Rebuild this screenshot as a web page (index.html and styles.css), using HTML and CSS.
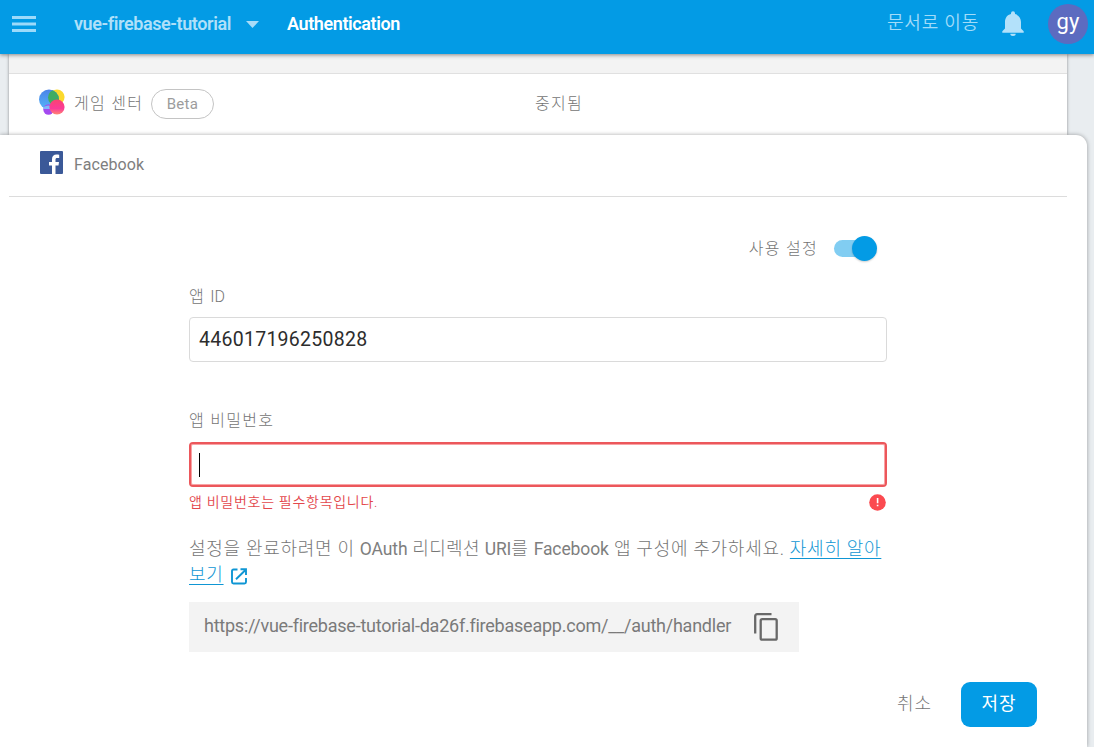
FILE: index.html
```html
<!DOCTYPE html>
<html lang="ko">
<head>
<meta charset="utf-8">
<title>Authentication</title>
<link rel="stylesheet" href="styles.css">
</head>
<body>
<header class="topbar">
  <svg class="menu" width="24" height="16" viewBox="0 0 24 16"><path d="M0 0h24v3H0zM0 6.500h24v3H0zM0 13h24v3H0z" fill="#9cdafa"/></svg>
  <span class="project">vue-firebase-tutorial</span>
  <svg class="caret" width="13" height="7" viewBox="0 0 13 7"><path d="M0 0h13L6.500 7z" fill="#a8dcf8"/></svg>
  <span class="title">Authentication</span>
  <span class="docs">문서로 이동</span>
  <svg class="bell" width="22" height="26" viewBox="0 0 22 26"><path d="M9 2.200a2 2 0 0 1 4 0v.9c3.800.9 6 4 6 8v6.500l2.700 2.700v1.400H.3v-1.400L3 17.600v-6.500c0-4 2.200-7.100 6-8zM8.300 22.700h5.400a2.700 2.200 0 0 1-5.400 0z" fill="#b3e1fa"/></svg>
  <span class="avatar">gy</span>
</header>
<main class="page">
  <section class="providers">
    <div class="spacer"></div>
    <div class="row">
      <svg class="game" width="26" height="26" viewBox="0 0 26 26">
        <defs>
          <linearGradient id="blue" x2="0" y2="1"><stop stop-color="#4b83e8"/><stop offset="1" stop-color="#55b5f8"/></linearGradient>
          <linearGradient id="pink" x2="0" y2="1"><stop stop-color="#fb4370"/><stop offset=".6" stop-color="#fa3b98"/><stop offset="1" stop-color="#ff8a70"/></linearGradient>
          <clipPath id="overlap"><circle cx="10" cy="10.500" r="10"/></clipPath>
        </defs>
        <circle cx="18" cy="8" r="7.600" fill="#fbd92c"/>
        <circle cx="10" cy="10.500" r="10" fill="url(#blue)"/>
        <circle cx="17" cy="8.500" r="8" fill="#3eac62" clip-path="url(#overlap)"/>
        <circle cx="9.500" cy="20.500" r="5.200" fill="#a44af0"/>
        <path d="M4.700 18a8 8 0 0 1 9 0v2H4.500z" fill="#7db9fb"/>
        <circle cx="18" cy="18" r="7.600" fill="url(#pink)"/>
      </svg>
      <span class="name korean">게임 센터</span>
      <span class="badge">Beta</span>
      <span class="status korean">중지됨</span>
    </div>
  </section>
  <section class="card">
    <div class="card-head">
      <svg class="fb" width="23" height="23" viewBox="0 0 23 23"><rect width="23" height="23" rx="1" fill="#3b5998"/><path d="M12 23v-8.500H9V11h3V8.200C12 5.200 13.800 3.600 16.500 3.600c1.300 0 2.400.1 2.700.2V7h-1.900c-1.500 0-1.800.7-1.800 1.700V11H19l-.5 3.500h-3V23z" fill="#fff"/></svg>
      <span class="latin">Facebook</span>
    </div>
    <form class="form">
      <div class="enable"><span class="korean">사용 설정</span><span class="toggle"><span class="thumb"></span></span></div>
      <label class="label korean">앱 <span class="id">ID</span></label>
      <div class="field">446017196250828</div>
      <label class="label second korean">앱 비밀번호</label>
      <div class="field invalid"><span class="cursor"></span></div>
      <div class="error"><span class="message">앱 비밀번호는 필수항목입니다.</span>
        <svg width="17" height="17" viewBox="0 0 17 17"><circle cx="8.500" cy="8.500" r="8.300" fill="#fb4a50"/><path d="M7.800 4h1.600v5.300H7.800zM7.800 10.700h1.600v1.600H7.800z" fill="#fff"/></svg>
      </div>
      <p class="help">설정을 완료하려면 이 <span class="en">OAuth</span><span class="tight"> 리디렉션 </span><span class="en">URI</span>를 <span class="en">Facebook</span> 앱 구성에 추가하세요. <a class="link">자세히 알아<br>보기</a><svg class="open" width="16" height="17" viewBox="0 0 16 17"><path d="M6.500 1.500H2.500Q1 1.500 1 3v11q0 1.500 1.500 1.500h11Q15 15.500 15 14v-4M9.500 1.200H15V7M15 1.500L5 11.300" fill="none" stroke="#0f96d4" stroke-width="1.900"/></svg></p>
      <div class="uri"><span class="uri-text">https://vue-firebase-tutorial-da26f.firebaseapp.com/__/auth/handler</span>
        <svg width="24" height="28" viewBox="0 0 24 28"><path d="M1.200 20.500V3.200q0-2 2-2H17.500" fill="none" stroke="#686868" stroke-width="2.300"/><rect x="6.700" y="6.200" width="16" height="20.500" rx="1.500" fill="none" stroke="#686868" stroke-width="2.300"/></svg>
      </div>
    </form>
    <div class="actions"><span class="cancel">취소</span><span class="save">저장</span></div>
  </section>
</main>
</body>
</html>
```
FILE: styles.css
```css
* { box-sizing: border-box; }
body { margin: 0; width: 1094px; height: 747px; overflow: hidden; background: #e9edf0; font-family: Roboto, "Noto Sans CJK KR", sans-serif; color: #757575; }
svg { display: block; flex: none; }
span { white-space: pre; }
.topbar { position: relative; z-index: 2; display: flex; align-items: center; height: 54px; padding: 0 6px 6px 12px; background: #039be5; box-shadow: 0 1px 4px rgba(0,0,0,.45); font-size: 18px; }
.project { margin: 0 0 2px 38px; width: 159px; color: #b0e0f9; font-weight: 600; letter-spacing: -.4px; }
.caret { margin-left: 13px; }
.title { margin: 0 0 2px 28px; color: #fff; font-weight: 600; letter-spacing: -.4px; }
.docs { margin: 0 0 2px auto; color: #a2dcf9; font-weight: 350; line-height: 24px; font-size: 18px; letter-spacing: .8px; }
.bell { margin-left: 23px; }
.avatar { width: 40px; height: 40px; margin-left: 24px; border-radius: 50%; background: #5c6bc0; color: #fff; font-size: 22px; line-height: 35px; text-align: center; }
.providers { width: 1058px; margin-left: 9px; background: #fff; box-shadow: 0 0 3px rgba(0,0,0,.4); }
.spacer { height: 20px; background: #f3f3f3; border-bottom: 1px solid #e0e0e0; }
.row { display: flex; align-items: center; height: 61px; padding: 0 0 2px 30px; }
.game { margin-top: -4px; }
.korean { font-size: 16px; line-height: 24px; font-weight: 300; letter-spacing: 1.3px; }
.name { width: 77px; margin-left: 9px; }
.badge { width: 63px; height: 30px; border: 1px solid #c4c4c4; border-radius: 15px; line-height: 29px; text-align: center; font-size: 15px; letter-spacing: .3px; color: #9c9c9c; }
.status { margin-left: 321px; }
.card { position: relative; width: 1087px; height: 612px; background: #fff; border-radius: 0 11px 0 0; box-shadow: 0 0 4px rgba(0,0,0,.35); }
.card-head { display: flex; align-items: center; width: 1058px; height: 62px; margin-left: 9px; padding: 0 0 6px 31px; border-bottom: 1px solid #dcdcdc; }
.latin { margin: 3px 0 0 11px; font-size: 16px; letter-spacing: .1px; color: #7e7e7e; }
.form { width: 698px; margin-left: 189px; padding-top: 39px; }
.enable { display: flex; align-items: center; justify-content: flex-end; height: 25px; padding-right: 10px; }
.toggle { display: flex; justify-content: flex-end; align-items: center; width: 43px; height: 17px; margin-left: 16px; border-radius: 9px; background: linear-gradient(90deg,#81cdf2 36px,transparent 36px); }
.thumb { width: 25px; height: 25px; border-radius: 50%; background: #039be5; box-shadow: 0 1px 2px rgba(0,0,0,.2); }
.label { display: block; margin: 24px 0 8px; height: 24px; }
.id { letter-spacing: 0; }
.label.second { margin-top: 47px; margin-bottom: 9px; }
.field { display: flex; align-items: center; height: 45px; padding: 0 9px; border: 1px solid #dadada; border-radius: 4px; color: #2d2d2d; font-size: 19.5px; letter-spacing: .27px; }
.invalid { border: 2px solid #ec575b; box-shadow: inset 0 0 0 1px #f8a3a5; padding-left: 8px; }
.cursor { width: 1px; height: 24px; background: #000; }
.error { display: flex; align-items: center; justify-content: space-between; height: 30px; padding-right: 1px; color: #e3474c; font-size: 14px; font-weight: 350; letter-spacing: .72px; }
.message { margin-bottom: 2px; }
.help { margin: 19px 0 0; font-size: 18px; line-height: 26px; height: 66px; font-weight: 300; white-space: nowrap; letter-spacing: .72px; }
.en { font-weight: 400; font-size: 17.5px; letter-spacing: -.1px; color: #7e7e7e; }
.tight { letter-spacing: .35px; }
.link { color: #0f96d4; text-decoration: underline; text-underline-offset: 3px; }
.open { display: inline-block; margin-left: 7px; vertical-align: -4px; }
.uri { display: flex; align-items: center; width: 610px; height: 50px; padding: 0 21px 0 15px; justify-content: space-between; background: #f3f3f3; font-size: 18px; color: #7a7a7a; }
.uri-text { letter-spacing: -.235px; margin-bottom: 4px; }
.actions { display: flex; align-items: center; justify-content: flex-end; height: 45px; margin-top: 30px; padding-right: 50px; font-size: 18px; }
.cancel { margin: 0 29px 5px 0; font-weight: 300; letter-spacing: .9px; }
.save { width: 76px; height: 45px; border-radius: 9px; background: #039be5; color: #fff; line-height: 43px; text-align: center; letter-spacing: .9px; }
```
